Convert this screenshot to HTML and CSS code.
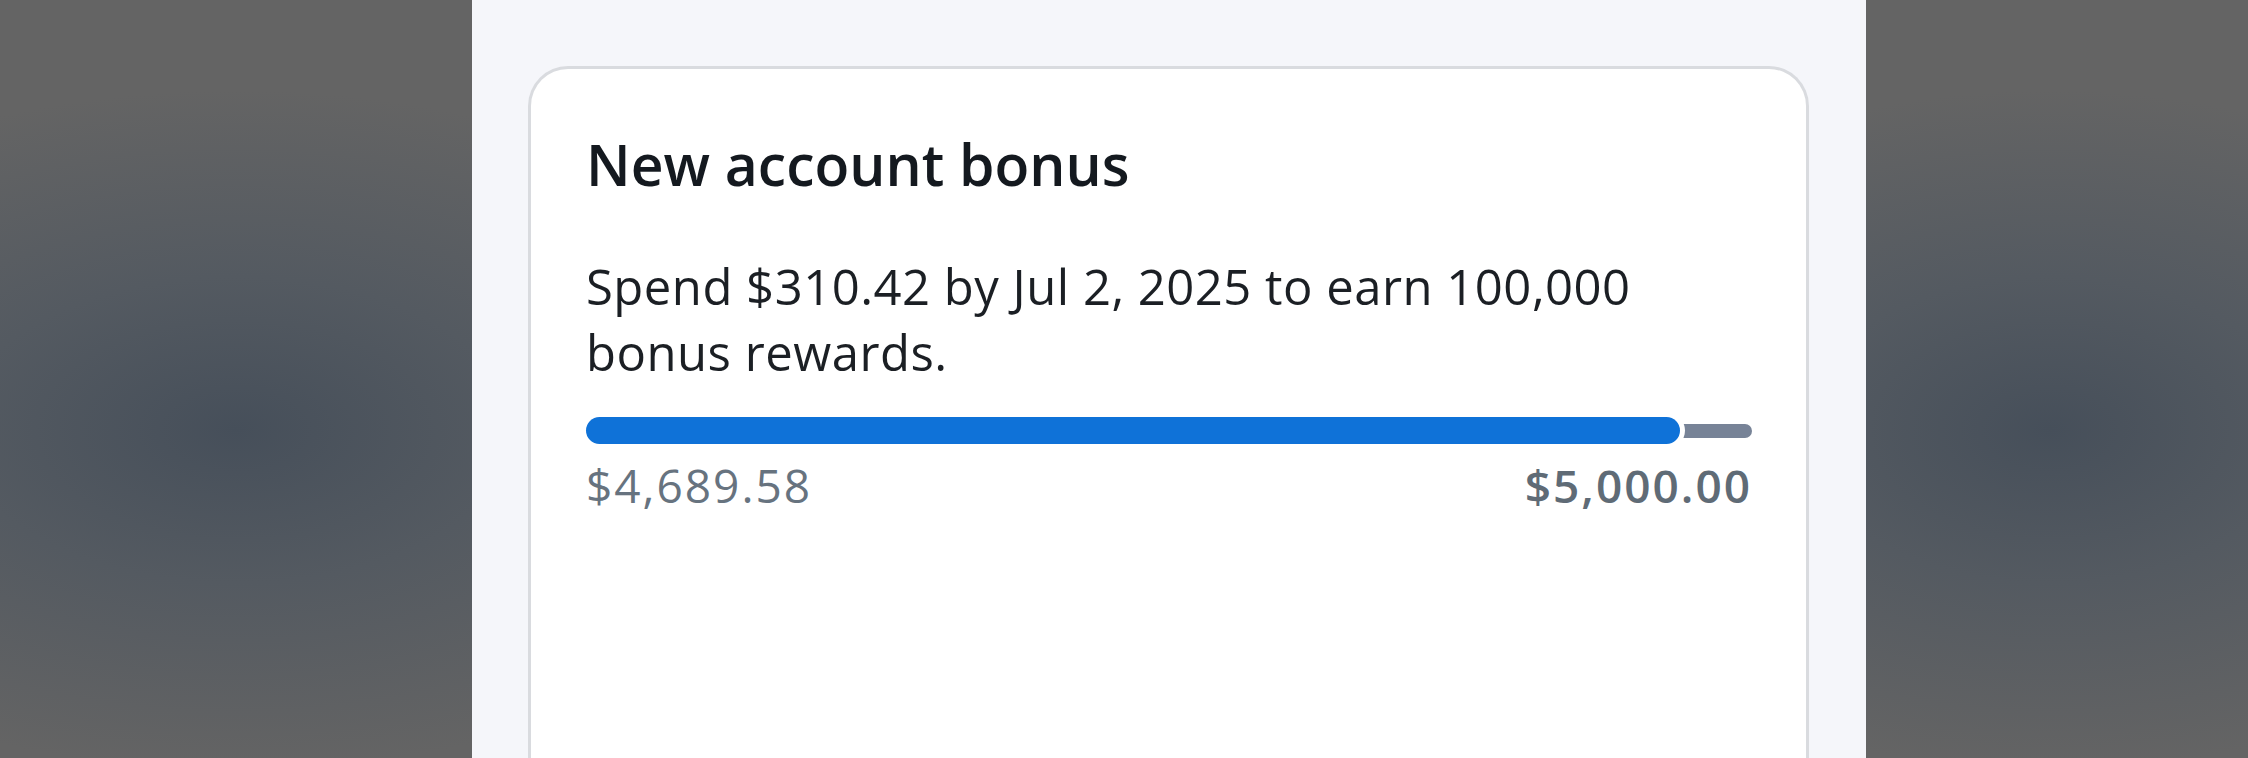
FILE: index.html
```html
<!DOCTYPE html>
<html>

	<head lang="en">
		<meta charset="UTF-8">
		<title>New account bonus</title>
		<link rel="stylesheet" href="styles.css">
	</head>

	<body>
		<div class="screen">
			<div class="card">
				<h2 class="title">New account bonus</h2>
				<p class="desc">Spend $310.42 by Jul 2, 2025 to earn 100,000 bonus rewards.</p>

				<div class="track">
					<span class="fill" style="width: 93.79%"></span>
					<span class="rest"></span>
				</div>

				<div class="amounts">
					<span class="spent">$4,689.58</span>
					<span class="goal">$5,000.00</span>
				</div>
			</div>
		</div>
	</body>

</html>
```

FILE: styles.css
```css
html,
body {
	margin: 0;
	height: 758px;
	overflow: hidden;
}

body {
	background:
		radial-gradient(ellipse 620px 340px at 236px 430px, #464f5a 0%, #545a61 45%, rgba(100, 100, 100, 0) 100%),
		radial-gradient(ellipse 560px 340px at 2050px 430px, #464f5a 0%, #545a61 45%, rgba(100, 100, 100, 0) 100%),
		#646464;
	font-family: "Open Sans", "Noto Sans", sans-serif;
}

.screen {
	width: 1394px;
	height: 758px;
	margin-left: 472px;
	padding: 66px 57px 0 56px;
	box-sizing: border-box;
	background: #f5f6fa;
	overflow: hidden;
}

.card {
	height: 720px;
	padding: 62px 54px 0 55px;
	background: #fff;
	border: 3px solid #d9dbdf;
	border-bottom: 0;
	border-radius: 40px 40px 0 0;
}

.title {
	margin: 0;
	font-size: 57px;
	line-height: 67px;
	font-weight: 600;
	color: #14191f;
}

.desc {
	margin: 55px 0 0;
	font-size: 49px;
	line-height: 66px;
	letter-spacing: 0.5px;
	color: #1b1f24;
}

.track {
	display: flex;
	align-items: center;
	height: 27px;
	margin-top: 32px;
}

.fill {
	position: relative;
	z-index: 1;
	height: 27px;
	border-radius: 14px;
	background: #0f72d8;
	box-shadow: 0 0 0 5px #fff;
}

.rest {
	flex: 1;
	height: 14px;
	margin-left: -20px;
	border-radius: 7px;
	background: #778397;
}

.amounts {
	display: flex;
	justify-content: space-between;
	margin-top: 10px;
	font-size: 46px;
	line-height: 62px;
	letter-spacing: 2px;
	color: #67737f;
}

.goal {
	font-weight: 600;
	color: #5f6b76;
}
```
